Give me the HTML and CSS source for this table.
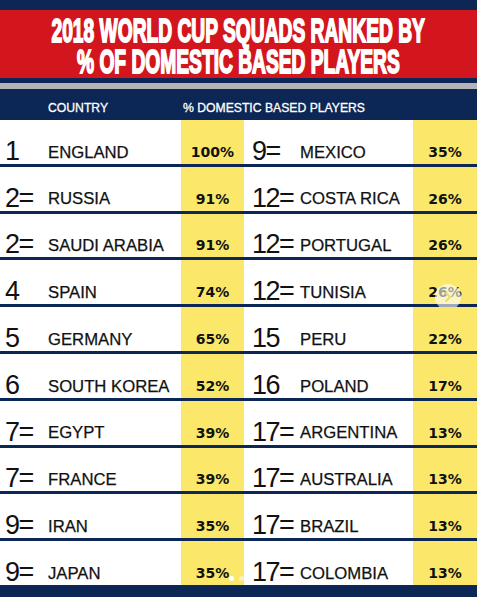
FILE: index.html
```html
<!DOCTYPE html>
<html>
<head>
<meta charset="utf-8">
<link rel="stylesheet" href="styles.css">
</head>
<body>
<div class="page">
  <div class="topbar"></div>
  <div class="title">
    <div class="tline"><span class="t1">2018 WORLD CUP SQUADS RANKED BY</span></div>
    <div class="tline"><span class="t2">% OF DOMESTIC BASED PLAYERS</span></div>
  </div>
  <div class="gap"></div>
  <div class="grey"></div>
  <div class="head">
    <span class="h-country">COUNTRY</span>
    <span class="h-pct">% DOMESTIC BASED PLAYERS</span>
  </div>
  <div class="table">
    <div class="entry left"><span class="rank">1</span><span class="country">ENGLAND</span><span class="pct">100%</span></div>
    <div class="entry right"><span class="rank">9=</span><span class="country">MEXICO</span><span class="pct">35%</span></div>
    <div class="entry left"><span class="rank">2=</span><span class="country">RUSSIA</span><span class="pct">91%</span></div>
    <div class="entry right"><span class="rank">12=</span><span class="country">COSTA RICA</span><span class="pct">26%</span></div>
    <div class="entry left"><span class="rank">2=</span><span class="country">SAUDI ARABIA</span><span class="pct">91%</span></div>
    <div class="entry right"><span class="rank">12=</span><span class="country">PORTUGAL</span><span class="pct">26%</span></div>
    <div class="entry left"><span class="rank">4</span><span class="country">SPAIN</span><span class="pct">74%</span></div>
    <div class="entry right"><span class="rank">12=</span><span class="country">TUNISIA</span><span class="pct">26%<span class="nav-circle"><svg width="26" height="26" viewBox="0 0 26 26"><path d="M11 9 L15 13 L11 17" fill="none" stroke="#e8dc7a" stroke-width="2" stroke-linecap="round" stroke-linejoin="round"/></svg></span></span></div>
    <div class="entry left"><span class="rank">5</span><span class="country">GERMANY</span><span class="pct">65%</span></div>
    <div class="entry right"><span class="rank">15</span><span class="country">PERU</span><span class="pct">22%</span></div>
    <div class="entry left"><span class="rank">6</span><span class="country">SOUTH KOREA</span><span class="pct">52%</span></div>
    <div class="entry right"><span class="rank">16</span><span class="country">POLAND</span><span class="pct">17%</span></div>
    <div class="entry left"><span class="rank">7=</span><span class="country">EGYPT</span><span class="pct">39%</span></div>
    <div class="entry right"><span class="rank">17=</span><span class="country">ARGENTINA</span><span class="pct">13%</span></div>
    <div class="entry left"><span class="rank">7=</span><span class="country">FRANCE</span><span class="pct">39%</span></div>
    <div class="entry right"><span class="rank">17=</span><span class="country">AUSTRALIA</span><span class="pct">13%</span></div>
    <div class="entry left"><span class="rank">9=</span><span class="country">IRAN</span><span class="pct">35%</span></div>
    <div class="entry right"><span class="rank">17=</span><span class="country">BRAZIL</span><span class="pct">13%</span></div>
    <div class="entry left"><span class="rank">9=</span><span class="country">JAPAN</span><span class="pct">35%<span class="dots"><span class="dot on"></span><span class="dot"></span></span></span></div>
    <div class="entry right"><span class="rank">17=</span><span class="country">COLOMBIA</span><span class="pct">13%</span></div>
  </div>
  <div class="bottom"></div>
</div>
</body>
</html>
```
FILE: styles.css
```css
* { box-sizing: border-box; }
html, body { margin: 0; padding: 0; }
body { background: #0c2756; }
.page {
  width: 477px;
  height: 597px;
  overflow: hidden;
  display: flex;
  flex-direction: column;
  background: #0c2756;
}
.topbar { height: 10px; background: #0c2756; }
.title {
  height: 68px;
  background: #d3161d;
  padding-top: 5px;
  color: #fff;
  font-family: "Liberation Sans", Arial, sans-serif;
  font-weight: 700;
  font-size: 31px;
  line-height: 31px;
}
.tline {
  display: flex;
  justify-content: center;
  white-space: nowrap;
}
.tline span {
  display: inline-block;
  flex: none;
  -webkit-text-stroke: 1.7px #fff;
  transform: scale(0.62, 1.07);
}
.gap { height: 5px; background: #0c2756; }
.grey { height: 6px; background: #b4b4b6; }
.head {
  height: 31px;
  background: #0c2756;
  color: #fff;
  font-family: "Liberation Sans", Arial, sans-serif;
  font-size: 12.2px;
  -webkit-text-stroke: 0.3px #fff;
  display: flex;
  align-items: center;
  padding-top: 6px;
}
.h-country { padding-left: 48px; width: 183px; }
.table {
  height: 468px;
  background: #fff;
  display: grid;
  grid-template-columns: 244px 233px;
  grid-template-rows: repeat(10, 1fr);
}
.entry {
  display: grid;
  align-items: end;
  border-bottom: 3px solid #0c2756;
  color: #111;
  font-family: "Liberation Sans", Arial, sans-serif;
}
.entry.left { grid-template-columns: 48px 133px 63px; }
.entry.right { grid-template-columns: 56px 113px 64px; }
.rank {
  font-size: 27px;
  line-height: 1;
  padding-left: 5px;
  margin-bottom: -1px;
  letter-spacing: -1.5px;
  white-space: nowrap;
}
.entry.right .rank { padding-left: 8px; }
.country {
  font-size: 16.7px;
  line-height: 1;
  padding-bottom: 2.5px;
  -webkit-text-stroke: 0.25px #111;
  white-space: nowrap;
}
.pct {
  position: relative;
  align-self: stretch;
  background: #fbe86a;
  display: flex;
  align-items: flex-end;
  justify-content: center;
  padding-bottom: 5px;
  font-family: "DejaVu Sans", Verdana, sans-serif;
  font-weight: 700;
  font-size: 14px;
  line-height: 1;
  color: #111;
}
.nav-circle {
  position: absolute;
  right: 16px;
  bottom: -6px;
  width: 26px;
  height: 26px;
  border-radius: 50%;
  background: rgba(255,255,255,0.6);
  display: flex;
  align-items: center;
  justify-content: center;
}
.dots {
  position: absolute;
  right: 0;
  bottom: 4px;
  display: flex;
  gap: 5px;
}
.dot {
  width: 5px;
  height: 5px;
  border-radius: 50%;
  background: rgba(255,255,255,0.5);
}
.dot.on { background: #fff; }
.bottom { flex: 1; background: #0c2756; }
```
